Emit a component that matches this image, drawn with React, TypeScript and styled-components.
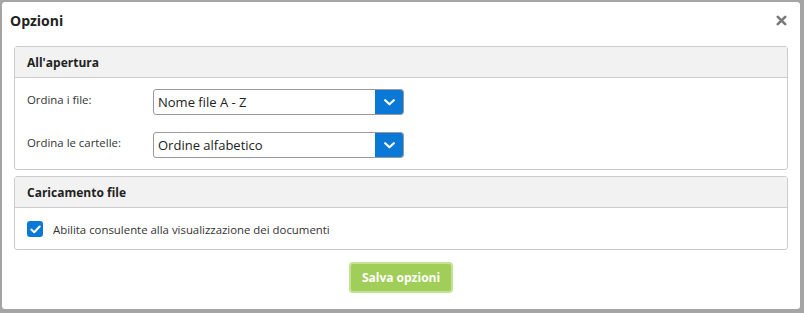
import styled, { createGlobalStyle } from "styled-components";

const Global = createGlobalStyle`
  html, body {
    margin: 0;
    padding: 0;
    background: #a5a5a5;
    font-family: "Open Sans", "Noto Sans", sans-serif;
  }
`;

const Dialog = styled.div`
  margin: 2px 4px 4px 2px;
  height: 307px;
  box-sizing: border-box;
  background: #fff;
  border-radius: 3px;
  display: flex;
  flex-direction: column;
`;

const Header = styled.div`
  display: flex;
  justify-content: space-between;
  align-items: center;
  height: 36px;
  padding: 0 13px 0 8px;
`;

const Title = styled.h1`
  margin: 0;
  font-size: 14px;
  font-weight: 700;
  color: #222;
`;

const Close = styled.button`
  border: 0;
  background: none;
  padding: 0;
  width: 11px;
  height: 11px;
  display: flex;
  cursor: pointer;
`;

const Body = styled.div`
  padding: 8px 12px 0;
  display: flex;
  flex-direction: column;
  gap: 6px;
`;

const Panel = styled.section`
  border: 1px solid #cccccc;
  border-radius: 3px;
`;

const PanelHeading = styled.div`
  height: 31px;
  box-sizing: border-box;
  background: #f2f2f2;
  border-bottom: 1px solid #cccccc;
  padding: 0 12px;
  display: flex;
  align-items: center;
  font-size: 12px;
  font-weight: 700;
  color: #222;
`;

const PanelBody = styled.div<{ $pad: string }>`
  padding: ${(p) => p.$pad};
  display: flex;
  flex-direction: column;
  gap: 17px;
`;

const Row = styled.div`
  display: flex;
  align-items: center;
`;

const Label = styled.label`
  width: 126px;
  font-size: 11.4px;
  color: #333;
  margin-top: -6px;
`;

const SelectBox = styled.div`
  width: 251px;
  height: 26px;
  box-sizing: border-box;
  border: 1px solid #9a9a9a;
  border-radius: 3px;
  display: flex;
  align-items: stretch;
  overflow: hidden;
`;

const SelectValue = styled.span`
  flex: 1;
  display: flex;
  align-items: center;
  padding: 0 4px;
  font-size: 13px;
  color: #222;
`;

const SelectArrow = styled.span`
  width: 29px;
  margin: -1px -1px -1px 0;
  background: #0a78d6;
  display: flex;
  align-items: center;
  justify-content: center;
`;

const CheckRow = styled.label`
  display: flex;
  align-items: center;
  gap: 10px;
  font-size: 11.4px;
  color: #333;
`;

const CheckBox = styled.span`
  width: 16px;
  height: 16px;
  border-radius: 3px;
  background: #0a78d6;
  display: flex;
  align-items: center;
  justify-content: center;
`;

const Footer = styled.div`
  display: flex;
  justify-content: center;
  padding-top: 12px;
`;

const SaveButton = styled.button`
  width: 104px;
  height: 31px;
  box-sizing: border-box;
  background: #a0ce58;
  border: 2px solid #c3e295;
  border-radius: 4px;
  color: #fff;
  font-family: "Open Sans", sans-serif;
  font-size: 12px;
  font-weight: 700;
  cursor: pointer;
`;

const Chevron = () => (
  <svg width="11" height="7" viewBox="0 0 11 7">
    <path d="M1.2 1.2 L5.5 5.3 L9.8 1.2" fill="none" stroke="#fff" strokeWidth="2.2" strokeLinecap="round" strokeLinejoin="round" />
  </svg>
);

const Select = ({ value }: { value: string }) => (
  <SelectBox>
    <SelectValue>{value}</SelectValue>
    <SelectArrow>
      <Chevron />
    </SelectArrow>
  </SelectBox>
);

export default function App() {
  return (
    <>
      <Global />
      <Dialog>
        <Header>
          <Title>Opzioni</Title>
          <Close aria-label="Chiudi">
            <svg width="11" height="11" viewBox="0 0 11 11">
              <path d="M1.8 1.8 L9.2 9.2 M9.2 1.8 L1.8 9.2" stroke="#7a7a7a" strokeWidth="2.6" strokeLinecap="round" />
            </svg>
          </Close>
        </Header>
        <Body>
          <Panel>
            <PanelHeading>All'apertura</PanelHeading>
            <PanelBody $pad="11px 12px 11px">
              <Row>
                <Label>Ordina i file:</Label>
                <Select value="Nome file A - Z" />
              </Row>
              <Row>
                <Label>Ordina le cartelle:</Label>
                <Select value="Ordine alfabetico" />
              </Row>
            </PanelBody>
          </Panel>
          <Panel>
            <PanelHeading>Caricamento file</PanelHeading>
            <PanelBody $pad="13px 12px 12px">
              <CheckRow>
                <CheckBox>
                  <svg width="11" height="9" viewBox="0 0 11 9">
                    <path d="M1.3 4.6 L4.2 7.3 L9.7 1.5" fill="none" stroke="#fff" strokeWidth="2" strokeLinecap="round" strokeLinejoin="round" />
                  </svg>
                </CheckBox>
                Abilita consulente alla visualizzazione dei documenti
              </CheckRow>
            </PanelBody>
          </Panel>
        </Body>
        <Footer>
          <SaveButton>Salva opzioni</SaveButton>
        </Footer>
      </Dialog>
    </>
  );
}
